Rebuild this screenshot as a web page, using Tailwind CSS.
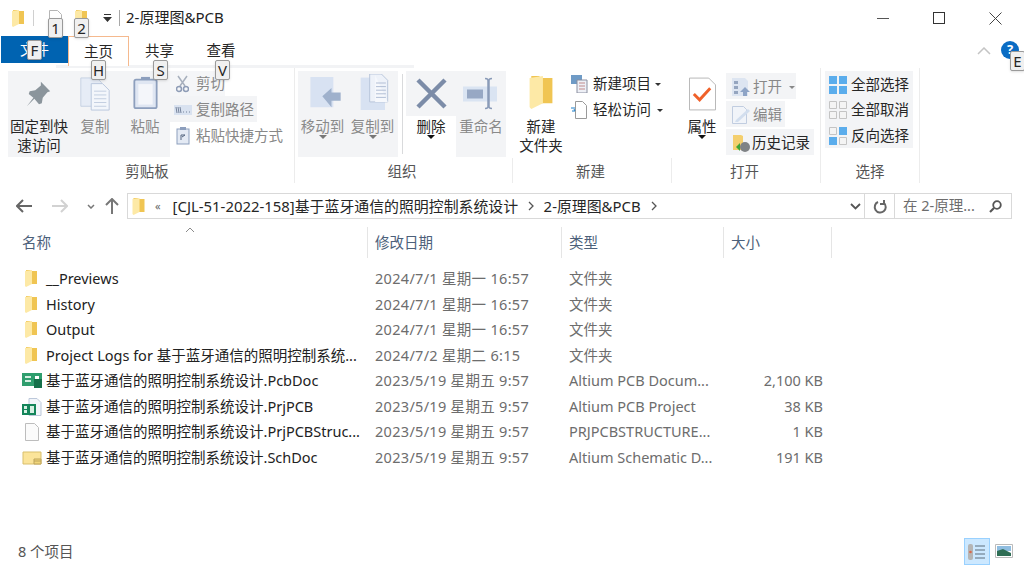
<!DOCTYPE html>
<html lang="zh-CN">
<head>
    <meta charset="UTF-8">
    <title>2-原理图&amp;PCB</title>
    <script src="https://cdn.jsdelivr.net/npm/@tailwindcss/browser@4"></script>
</head>
<body class="bg-white overflow-hidden font-['Noto_Sans','Noto_Sans_CJK_SC',sans-serif] text-[14.5px] text-[#262626]">
<svg class="hidden">
    <symbol id="folder" viewBox="0 0 12 17">
        <path d="M1 0h4l1 1h6v13H1z" fill="#f0c553"/>
        <path d="M0 1l7-1v14l-6 3-1-1z" fill="#fde9a6"/>
    </symbol>
</svg>
<div class="relative w-[1024px] h-[566px] overflow-hidden">

    <!-- title bar -->
    <div class="flex items-center h-[36px] pl-[12px]">
        <svg class="w-[12px] h-[17px]"><use href="#folder"/></svg>
        <div class="w-px h-[16px] bg-[#d0d0d0] ml-[9px]"></div>
        <svg class="ml-[14px] w-[14px] h-[17px]" viewBox="0 0 14 17"><path d="M1.500.5h8l4 4v12h-12z" fill="#fff" stroke="#b5b5b5"/></svg>
        <svg class="ml-[13px] w-[12px] h-[17px]"><use href="#folder"/></svg>
        <svg class="ml-[16px] w-[9px] h-[8px]" viewBox="0 0 9 8"><path d="M1 0h7v1H1zM0 3h9L4.500 8z" fill="#333"/></svg>
        <div class="w-px h-[16px] bg-[#a8a8a8] ml-[7px]"></div>
        <div class="ml-[6px] text-[15px] text-[#222] pb-[1px]">2-原理图&amp;PCB</div>
        <div class="ml-auto flex items-center pr-[22px] gap-[44px]">
            <div class="w-[12px] h-px bg-[#555]"></div>
            <div class="w-[12px] h-[12px] border border-[#333]"></div>
            <svg class="w-[13px] h-[13px]" viewBox="0 0 13 13"><path d="M.5.500l12 12M12.500.500l-12 12" stroke="#444" fill="none"/></svg>
        </div>
    </div>

    <!-- tabs -->
    <div class="flex h-[29px] pl-[1px]">
        <div class="w-[67px] h-[27px] bg-[#0063b1] text-white flex items-center justify-center">文件</div>
        <div class="relative z-10 w-[61px] h-[30px] bg-white border border-b-0 border-[#f5b98e] flex items-center justify-center">主页</div>
        <div class="w-[61px] flex items-center justify-center pt-[1px]">共享</div>
        <div class="w-[62px] flex items-center justify-center pt-[1px]">查看</div>
        <svg class="ml-auto mr-[33px] mt-[11px] w-[14px] h-[8px]" viewBox="0 0 14 8"><path d="M1 7l6-6 6 6" fill="none" stroke="#c4c4c4" stroke-width="1.500"/></svg>
        <div class="absolute right-[5px] top-[41px] w-[18px] h-[18px] rounded-full bg-[#0a6cc4] text-white text-[13px] font-bold flex items-center justify-center">?</div>
    </div>

    <!-- ribbon -->
    <div class="h-[3px] w-[358px] ml-[56px] bg-[#f2f3f5]"></div>
    <div class="flex h-[115px]">

        <!-- clipboard -->
        <div class="w-[295px] flex flex-col border-r border-[#ececec]">
            <div class="flex h-[94px] pl-[8px]">
                <div class="flex w-[162px] h-[86px] mt-[3px] bg-[#f3f4f6]">
                    <div class="w-[62px] flex flex-col items-center text-center leading-[19px]">
                        <svg class="mt-[9px] w-[28px] h-[28px]" viewBox="0 0 28 30"><path d="M16 2l10 10-3 1-5 6-1 6-3 1-5-6-8 8 7-9-5-4 1-3 6-1 6-5z" fill="#8b959c"/></svg>
                        <div class="mt-[8.500px]">固定到快<br>速访问</div>
                    </div>
                    <div class="w-[50px] flex flex-col items-center text-[#8a8a8a]">
                        <svg class="mt-[6px] w-[32px] h-[34px]" viewBox="0 0 32 36"><path d="M1 1h17l5 5v25H1z" fill="#e6ecf6" stroke="#c5d0e2"/><path d="M12 7h12l7 7v21H12z" fill="#f3f6fb" stroke="#b8c6dc"/><path d="M15 15h13M15 19h13M15 23h13M15 27h13M15 31h13" stroke="#c0ccdf"/></svg>
                        <div class="mt-[4.500px]">复制</div>
                    </div>
                    <div class="w-[50px] flex flex-col items-center text-[#8a8a8a]">
                        <svg class="mt-[5px] w-[25px] h-[34px]" viewBox="0 0 28 38"><rect x="1.500" y="4" width="25" height="32" rx="2" fill="#dfe6f2" stroke="#8d9fbd" stroke-width="2"/><path d="M9 4h10V1H9z" fill="#8d9fbd"/><path d="M6 9h16v23H6z" fill="#f4f6fa"/></svg>
                        <div class="mt-[5.500px]">粘贴</div>
                    </div>
                </div>
                <div class="flex flex-col items-start mt-[3px] text-[#888]">
                    <div class="flex items-center h-[25px] w-[55px] pl-[6px] gap-[4px] bg-[#f5f6f8]">
                        <svg class="w-[13px] h-[18px]" viewBox="0 0 13 18"><path d="M2 1l7 10M11 1L4 11" stroke="#a8b0bd" stroke-width="1.500"/><circle cx="3" cy="14" r="2.500" fill="none" stroke="#8e9cb6" stroke-width="1.500"/><circle cx="10" cy="14" r="2.500" fill="none" stroke="#8e9cb6" stroke-width="1.500"/></svg>
                        <span class="ml-[3px] whitespace-nowrap">剪切</span>
                    </div>
                    <div class="flex items-center h-[26px] w-[87px] pl-[4px] pt-[2px] gap-[4px] bg-[#f3f4f6]">
                        <svg class="w-[18px] h-[10px] shrink-0" viewBox="0 0 18 10"><path d="M0 0h18v10H0z" fill="#d9e2f0"/><path d="M2 2l1 6M4 2l1 6M6 2l1 6M9 7h1M12 7h1M15 7h1" stroke="#74829b"/></svg>
                        <span class="whitespace-nowrap">复制路径</span>
                    </div>
                    <div class="flex items-center h-[26px] pl-[6px] pt-[2px] gap-[6px]">
                        <svg class="w-[14px] h-[18px]" viewBox="0 0 14 18"><rect x="1" y="2" width="12" height="15" fill="#e4eaf4" stroke="#8d9fbd"/><path d="M4 0h6v3H4z" fill="#8d9fbd"/><path d="M5 13V8h4M6 10l3-2" stroke="#566680" fill="none"/></svg>
                        <span class="whitespace-nowrap">粘贴快捷方式</span>
                    </div>
                </div>
            </div>
            <div class="text-center text-[#555] mt-[3px]">剪贴板</div>
        </div>

        <!-- organise -->
        <div class="w-[218px] flex flex-col">
            <div class="flex h-[94px] pl-[3px] pt-[3px]">
                <div class="flex w-[100px] h-[86px] bg-[#f3f4f6] text-[#8a8a8a]">
                    <div class="w-[49px] flex flex-col items-center">
                        <svg class="mt-[6px] ml-[6px] w-[32px] h-[33px] shrink-0" viewBox="0 0 34 36"><path d="M0 0h25v33H0z" fill="#d8e2f2"/><path d="M13 21l10-9v5h10v9H23v7z" fill="#9fb1cc"/></svg>
                        <div class="mt-[5.500px] whitespace-nowrap">移动到</div>
                        <div class="mt-[-2px] w-0 h-0 border-x-[4px] border-x-transparent border-t-[4px] border-t-[#777]"></div>
                    </div>
                    <div class="w-[51px] flex flex-col items-center">
                        <svg class="mt-[3px] ml-[6px] w-[32px] h-[36px] shrink-0" viewBox="0 0 34 40"><path d="M0 4h27v36H0z" fill="#d8e2f2"/><path d="M10 0h13l7 7v24H10z" fill="#eef2f9" stroke="#b3c1d8"/><path d="M16 1v30h14" fill="#f6f8fc"/><path d="M17 10h11M17 14h11M17 18h11M17 22h11M17 26h11" stroke="#aab8d0"/></svg>
                        <div class="mt-[5.500px] whitespace-nowrap">复制到</div>
                        <div class="mt-[-2px] w-0 h-0 border-x-[4px] border-x-transparent border-t-[4px] border-t-[#777]"></div>
                    </div>
                </div>
                <div class="w-px h-[80px] bg-[#d9dadc] ml-[4px] mt-[3px]"></div>
                <div class="flex flex-col items-center w-[50px] ml-[3px]">
                    <div class="w-[50px] h-[45px] bg-[#f3f4f6] flex items-center justify-center">
                        <svg class="w-[31px] h-[31px]" viewBox="0 0 31 31"><path d="M2 2l27 27M29 2L2 29" stroke="#7c8ca8" stroke-width="4.500" fill="none"/></svg>
                    </div>
                    <div class="mt-[-0.500px]">删除</div>
                    <div class="mt-[-2px] w-0 h-0 border-x-[4px] border-x-transparent border-t-[4px] border-t-[#111]"></div>
                </div>
                <div class="w-[50px] h-[86px] bg-[#f3f4f6] text-[#8a8a8a] flex flex-col items-center">
                    <svg class="mt-[6px] w-[36px] h-[33px] shrink-0" viewBox="0 0 36 32"><path d="M0 9h34v15H0z" fill="#dae4f2"/><path d="M4 12h16v9H4z" fill="#97a8c4"/><path d="M22 1c3 0 3 1 3 3v24c0 2 0 3-3 3M29 1c-3 0-3 1-3 3v24c0 2 0 3 3 3" fill="none" stroke="#8a9bb8" stroke-width="1.500"/></svg>
                    <div class="mt-[5.500px] whitespace-nowrap">重命名</div>
                </div>
            </div>
            <div class="flex-1 text-center text-[#555] border-r border-[#ececec] pr-[3px] pt-[3px]">组织</div>
        </div>

        <!-- new -->
        <div class="w-[159px] flex flex-col">
            <div class="flex h-[94px]">
                <div class="w-[56px] flex flex-col items-center text-center leading-[19px]">
                    <svg class="mt-[8px] w-[24px] h-[33px]" viewBox="0 0 12 17"><use href="#folder"/></svg>
                    <div class="mt-[7.500px]">新建<br>文件夹</div>
                </div>
                <div class="flex flex-col mt-[3px] ml-[2px]">
                    <div class="flex items-center h-[26px] gap-[4px]">
                        <svg class="w-[18px] h-[18px]" viewBox="0 0 18 18"><path d="M0 0h11v9H0z" fill="#6f9bc6"/><path d="M6 5h10v13H6z" fill="#eef0f6" stroke="#8a8fa0"/><path d="M8 8h6M8 11h6M8 14h6" stroke="#c08a8a"/></svg>
                        <span>新建项目</span>
                        <div class="w-0 h-0 border-x-[3px] border-x-transparent border-t-[3px] border-t-[#333]"></div>
                    </div>
                    <div class="flex items-center h-[26px] gap-[6px]">
                        <svg class="w-[16px] h-[18px]" viewBox="0 0 16 18"><path d="M4.500.5h7l4 4v13h-11z" fill="#fff" stroke="#9a9a9a"/><path d="M0 7h4M1 10h3l-1-2" stroke="#1d7fc8" fill="none"/></svg>
                        <span>轻松访问</span>
                        <div class="w-0 h-0 border-x-[3px] border-x-transparent border-t-[3px] border-t-[#333]"></div>
                    </div>
                </div>
            </div>
            <div class="flex-1 text-center text-[#555] border-r border-[#ececec] pr-[3px] pt-[3px]">新建</div>
        </div>

        <!-- open -->
        <div class="w-[149px] flex flex-col border-r border-[#ececec]">
            <div class="flex h-[94px]">
                <div class="w-[54px] pl-[6px] flex flex-col items-center">
                    <svg class="mt-[9px] w-[27px] h-[34px] shrink-0" viewBox="0 0 28 34"><path d="M.500.5h20l7 7v26h-27z" fill="#fff" stroke="#b5b5b5"/><path d="M5 17l6 6 11-12" fill="none" stroke="#f0612a" stroke-width="3"/></svg>
                    <div class="mt-[4.500px]">属性</div>
                    <div class="mt-[-2px] w-0 h-0 border-x-[4px] border-x-transparent border-t-[4px] border-t-[#111]"></div>
                </div>
                <div class="flex flex-col items-start gap-[2px] mt-[5px]">
                    <div class="flex items-center h-[26px] w-[70px] pl-[6px] pt-[2px] gap-[3px] bg-[#f3f4f6] text-[#888]">
                        <svg class="w-[18px] h-[18px]" viewBox="0 0 18 18"><path d="M0 0h13l3 3v15H0z" fill="#dde5f1"/><path d="M2 3h4v3H2zM2 8h4v3H2zM2 13h4v3H2z" fill="#95a5bf"/><path d="M13 9l5 5h-3v4h-4v-4H8z" fill="#8ea4c6"/></svg>
                        <span>打开</span>
                        <div class="ml-[4px] w-0 h-0 border-x-[3px] border-x-transparent border-t-[3px] border-t-[#888]"></div>
                    </div>
                    <div class="flex items-center h-[26px] w-[59px] pl-[6px] pt-[2px] gap-[3px] bg-[#f3f4f6] text-[#888]">
                        <svg class="w-[18px] h-[18px]" viewBox="0 0 18 18"><path d="M.500.5h11l3 3v14H.5z" fill="#f1f4f9" stroke="#c1cde0"/><path d="M4 14L16 3l2 2L6 16H3z" fill="#d2deee"/></svg>
                        <span>编辑</span>
                    </div>
                    <div class="flex items-center h-[26px] w-[88px] pl-[6px] pt-[2px] gap-[2px] bg-[#f3f4f6] whitespace-nowrap">
                        <svg class="w-[18px] h-[18px] shrink-0" viewBox="0 0 18 18"><path d="M1 1h8l2 1v14H1z" fill="#f4cf6e"/><circle cx="13" cy="13" r="5" fill="#7f8285"/><path d="M4 13l4-4v8z" fill="#3fa535"/></svg>
                        <span>历史记录</span>
                    </div>
                </div>
            </div>
            <div class="text-center text-[#555] pr-[3px] mt-[3px]">打开</div>
        </div>

        <!-- select -->
        <div class="w-[99px] flex flex-col border-r border-[#ececec]">
            <div class="h-[94px] pl-[4px] pt-[3px]">
                <div class="w-[88px] h-[77px] bg-[#f3f4f6] flex flex-col whitespace-nowrap">
                    <div class="flex items-center h-[25px] pl-[4px] pt-[2px] gap-[4px]">
                        <svg class="w-[18px] h-[18px] shrink-0" viewBox="0 0 18 18"><path d="M0 0h8v8H0zM10 0h8v8h-8zM0 10h8v8H0zM10 10h8v8h-8z" fill="#5badec"/></svg>
                        <span>全部选择</span>
                    </div>
                    <div class="flex items-center h-[26px] pl-[4px] pt-[2px] gap-[4px]">
                        <svg class="w-[18px] h-[18px] shrink-0" viewBox="0 0 18 18"><path d="M.500.5h7v7h-7zM10.500.5h7v7h-7zM.500 10.500h7v7h-7zM10.500 10.500h7v7h-7z" fill="#f4f4f4" stroke="#c4c4c4"/></svg>
                        <span>全部取消</span>
                    </div>
                    <div class="flex items-center h-[25px] pl-[4px] pt-[2px] gap-[4px]">
                        <svg class="w-[18px] h-[18px] shrink-0" viewBox="0 0 18 18"><path d="M10 0h8v8h-8zM0 10h8v8H0z" fill="#5badec"/><path d="M.500.5h7v7h-7zM10.500 10.500h7v7h-7z" fill="#f4f4f4" stroke="#c4c4c4"/></svg>
                        <span>反向选择</span>
                    </div>
                </div>
            </div>
            <div class="text-center text-[#555] mt-[3px]">选择</div>
        </div>
    </div>

    <!-- address row -->
    <div class="flex items-center h-[26px] mt-[10px] pl-[16px]">
        <svg class="w-[16px] h-[14px]" viewBox="0 0 16 14"><path d="M7 1L1 7l6 6M1 7h15" fill="none" stroke="#666" stroke-width="2"/></svg>
        <svg class="ml-[20px] w-[16px] h-[14px]" viewBox="0 0 16 14"><path d="M9 1l6 6-6 6M15 7H0" fill="none" stroke="#d2d2d2" stroke-width="2"/></svg>
        <svg class="ml-[19px] w-[8px] h-[5px]" viewBox="0 0 8 5"><path d="M1 1l3 3 3-3" fill="none" stroke="#777" stroke-width="1.500"/></svg>
        <svg class="ml-[10px] w-[14px] h-[16px]" viewBox="0 0 14 16"><path d="M1 7l6-6 6 6M7 1v15" fill="none" stroke="#777" stroke-width="2"/></svg>
        <div class="ml-[8px] w-[738px] h-[26px] border border-[#d9d9d9] flex items-center pl-[4px]">
            <svg class="w-[13px] h-[17px]"><use href="#folder"/></svg>
            <span class="ml-[10px] text-[11px] text-[#666]">«</span>
            <span class="ml-[12px] w-[346px] whitespace-nowrap text-[14.900px]">[CJL-51-2022-158]基于蓝牙通信的照明控制系统设计</span>
            <svg class="ml-[9px] w-[6px] h-[10px]" viewBox="0 0 6 10"><path d="M1 1l4 4-4 4" fill="none" stroke="#555" stroke-width="1.300"/></svg>
            <span class="ml-[10px] whitespace-nowrap text-[14.900px]">2-原理图&amp;PCB</span>
            <svg class="ml-[10px] w-[6px] h-[10px]" viewBox="0 0 6 10"><path d="M1 1l4 4-4 4" fill="none" stroke="#555" stroke-width="1.300"/></svg>
            <svg class="ml-auto mr-[3px] w-[11px] h-[7px]" viewBox="0 0 11 7"><path d="M1 1l4.500 4.500L10 1" fill="none" stroke="#555" stroke-width="1.800"/></svg>
        </div>
        <div class="h-[26px] w-[31px] border border-[#d9d9d9] flex items-center justify-center ml-[-1px] mr-[-1px]">
            <svg class="w-[14px] h-[15px]" viewBox="0 0 14 15"><path d="M5 3a5.500 5.500 0 1 0 6 1M11 1v4H7" fill="none" stroke="#666" stroke-width="2"/></svg>
        </div>
        <div class="w-[118px] h-[26px] border border-[#d9d9d9] flex items-center pl-[8px] pr-[9px] text-[#6d6d6d] whitespace-nowrap">
            <span>在 2-原理...</span>
            <svg class="ml-auto w-[13px] h-[13px]" viewBox="0 0 13 13"><circle cx="8" cy="5" r="3.800" fill="none" stroke="#555" stroke-width="1.800"/><path d="M5 8l-4 4" stroke="#555" stroke-width="2.200"/></svg>
        </div>
    </div>

    <!-- column header -->
    <div class="relative grid grid-cols-[368px_194px_162px_108px] w-[832px] h-[31px] mt-[8px] text-[#4c607a]">
        <div class="pl-[22px] pt-[1px] border-r border-[#e5e5e5] flex items-center">名称</div>
        <div class="pl-[7px] pt-[1px] border-r border-[#e5e5e5] flex items-center">修改日期</div>
        <div class="pl-[7px] pt-[1px] border-r border-[#e5e5e5] flex items-center">类型</div>
        <div class="pl-[7px] pt-[1px] border-r border-[#e5e5e5] flex items-center">大小</div>
        <svg class="absolute left-[185px] top-[0px] w-[10px] h-[6px]" viewBox="0 0 10 6"><path d="M1 5l4-4 4 4" fill="none" stroke="#8a8a8a"/></svg>
    </div>

    <!-- file list -->
    <div class="mt-[8px] w-[832px] text-[#6d6d6d]">
        <div class="grid grid-cols-[368px_194px_162px_108px] h-[25.600px] items-center">
            <div class="flex items-center pl-[25px] gap-[9px] text-[#222] whitespace-nowrap"><svg class="w-[12px] h-[17px]"><use href="#folder"/></svg>__Previews</div>
            <div class="pl-[7px] tracking-[0.3px]">2024/7/1 星期一 16:57</div>
            <div class="pl-[7px]">文件夹</div>
            <div></div>
        </div>
        <div class="grid grid-cols-[368px_194px_162px_108px] h-[25.600px] items-center">
            <div class="flex items-center pl-[25px] gap-[9px] text-[#222] whitespace-nowrap"><svg class="w-[12px] h-[17px]"><use href="#folder"/></svg>History</div>
            <div class="pl-[7px] tracking-[0.3px]">2024/7/1 星期一 16:57</div>
            <div class="pl-[7px]">文件夹</div>
            <div></div>
        </div>
        <div class="grid grid-cols-[368px_194px_162px_108px] h-[25.600px] items-center">
            <div class="flex items-center pl-[25px] gap-[9px] text-[#222] whitespace-nowrap"><svg class="w-[12px] h-[17px]"><use href="#folder"/></svg>Output</div>
            <div class="pl-[7px] tracking-[0.3px]">2024/7/1 星期一 16:57</div>
            <div class="pl-[7px]">文件夹</div>
            <div></div>
        </div>
        <div class="grid grid-cols-[368px_194px_162px_108px] h-[25.600px] items-center">
            <div class="flex items-center pl-[25px] gap-[9px] text-[#222] whitespace-nowrap"><svg class="w-[12px] h-[17px]"><use href="#folder"/></svg>Project Logs for 基于蓝牙通信的照明控制系统...</div>
            <div class="pl-[7px] tracking-[0.3px]">2024/7/2 星期二 6:15</div>
            <div class="pl-[7px]">文件夹</div>
            <div></div>
        </div>
        <div class="grid grid-cols-[368px_194px_162px_108px] h-[25.600px] items-center">
            <div class="flex items-center pl-[22px] gap-[4px] text-[#222] whitespace-nowrap">
                <svg class="w-[20px] h-[16px]" viewBox="0 0 20 16"><path d="M0 0h20v13H0z" fill="#2f9e6e"/><path d="M3 3h6v2H3zM3 7h6v2H3z" fill="#d5efe2"/><path d="M12 6h8v9h-8z" fill="#15704a"/><path d="M13 3h4v3h-4z" fill="#fff"/></svg>
                基于蓝牙通信的照明控制系统设计.PcbDoc</div>
            <div class="pl-[7px] tracking-[0.3px]">2023/5/19 星期五 9:57</div>
            <div class="pl-[7px]">Altium PCB Docum...</div>
            <div class="text-right pr-[9px]">2,100 KB</div>
        </div>
        <div class="grid grid-cols-[368px_194px_162px_108px] h-[25.600px] items-center">
            <div class="flex items-center pl-[22px] gap-[4px] text-[#222] whitespace-nowrap">
                <svg class="w-[20px] h-[18px]" viewBox="0 0 20 18"><path d="M7 .5h8l4 4v13H7z" fill="#f2f5fa" stroke="#bcc8da"/><path d="M0 6h14v11H0z" fill="#14855a"/><path d="M2 8h3v3H2zM2 12h3v3H2zM8 8h4v7H8z" fill="#d5efe2"/></svg>
                基于蓝牙通信的照明控制系统设计.PrjPCB</div>
            <div class="pl-[7px] tracking-[0.3px]">2023/5/19 星期五 9:57</div>
            <div class="pl-[7px]">Altium PCB Project</div>
            <div class="text-right pr-[9px]">38 KB</div>
        </div>
        <div class="grid grid-cols-[368px_194px_162px_108px] h-[25.600px] items-center">
            <div class="flex items-center pl-[22px] gap-[4px] text-[#222] whitespace-nowrap">
                <svg class="w-[20px] h-[18px]" viewBox="0 0 20 18"><path d="M3.500.5h9l4 4v13h-13z" fill="#fbfbfb" stroke="#bdbdbd"/></svg>
                基于蓝牙通信的照明控制系统设计.PrjPCBStruc...</div>
            <div class="pl-[7px] tracking-[0.3px]">2023/5/19 星期五 9:57</div>
            <div class="pl-[7px]">PRJPCBSTRUCTURE...</div>
            <div class="text-right pr-[9px]">1 KB</div>
        </div>
        <div class="grid grid-cols-[368px_194px_162px_108px] h-[25.600px] items-center">
            <div class="flex items-center pl-[22px] gap-[4px] text-[#222] whitespace-nowrap">
                <svg class="w-[20px] h-[14px]" viewBox="0 0 20 14"><path d="M1 1h18v12H1z" fill="#fbe49a" stroke="#d9bf6c"/><path d="M12 8h7v5h-7zM12 10h7" fill="#f1d67a" stroke="#bda45c"/></svg>
                基于蓝牙通信的照明控制系统设计.SchDoc</div>
            <div class="pl-[7px] tracking-[0.3px]">2023/5/19 星期五 9:57</div>
            <div class="pl-[7px]">Altium Schematic D...</div>
            <div class="text-right pr-[9px]">191 KB</div>
        </div>
    </div>

    <!-- status bar -->
    <div class="absolute left-0 right-0 bottom-0 h-[29px] flex items-center pl-[18px] text-[#555]">
        <span>8 个项目</span>
        <div class="ml-auto mr-[34px] w-[26px] h-[27px] bg-[#cce8ff] border border-[#99d1ff] flex items-center justify-center">
            <svg class="w-[18px] h-[18px]" viewBox="0 0 18 18"><rect x="0" y="1" width="5" height="16" rx="2" fill="#b5b5b5"/><path d="M7 3h10M7 7h10M7 11h10M7 15h10" stroke="#5f6f7d"/><circle cx="2.500" cy="9" r="1.300" fill="#d9694c"/></svg>
        </div>
        <svg class="absolute right-[11px] top-[7px] w-[18px] h-[14px]" viewBox="0 0 18 14"><path d="M.5.500h17v13H.5z" fill="#fff" stroke="#bbb"/><path d="M2 2h14v5H2z" fill="#8fbde0"/><path d="M2 7l6-2 8 4v3H2z" fill="#2f6e55"/></svg>
    </div>

    <!-- key tips -->
    <div class="absolute z-20 left-[48px] top-[18px] w-[15px] h-[20px] bg-[#f0f0f0] border border-[#9a9a9a] rounded-[2px] shadow-sm flex items-center justify-center text-[15px]">1</div>
    <div class="absolute z-20 left-[74px] top-[18px] w-[15px] h-[20px] bg-[#f0f0f0] border border-[#9a9a9a] rounded-[2px] shadow-sm flex items-center justify-center text-[15px]">2</div>
    <div class="absolute z-20 left-[27px] top-[40px] w-[15px] h-[20px] bg-[#f0f0f0] border border-[#9a9a9a] rounded-[2px] shadow-sm flex items-center justify-center text-[15px]">F</div>
    <div class="absolute z-20 left-[91px] top-[60px] w-[15px] h-[20px] bg-[#f0f0f0] border border-[#9a9a9a] rounded-[2px] shadow-sm flex items-center justify-center text-[15px]">H</div>
    <div class="absolute z-20 left-[153px] top-[60px] w-[15px] h-[20px] bg-[#f0f0f0] border border-[#9a9a9a] rounded-[2px] shadow-sm flex items-center justify-center text-[15px]">S</div>
    <div class="absolute z-20 left-[215px] top-[60px] w-[15px] h-[20px] bg-[#f0f0f0] border border-[#9a9a9a] rounded-[2px] shadow-sm flex items-center justify-center text-[15px]">V</div>
    <div class="absolute z-20 left-[1010px] top-[51px] w-[15px] h-[20px] bg-[#f0f0f0] border border-[#9a9a9a] rounded-[2px] shadow-sm flex items-center justify-center text-[15px]">E</div>
</div>
</body>
</html>
